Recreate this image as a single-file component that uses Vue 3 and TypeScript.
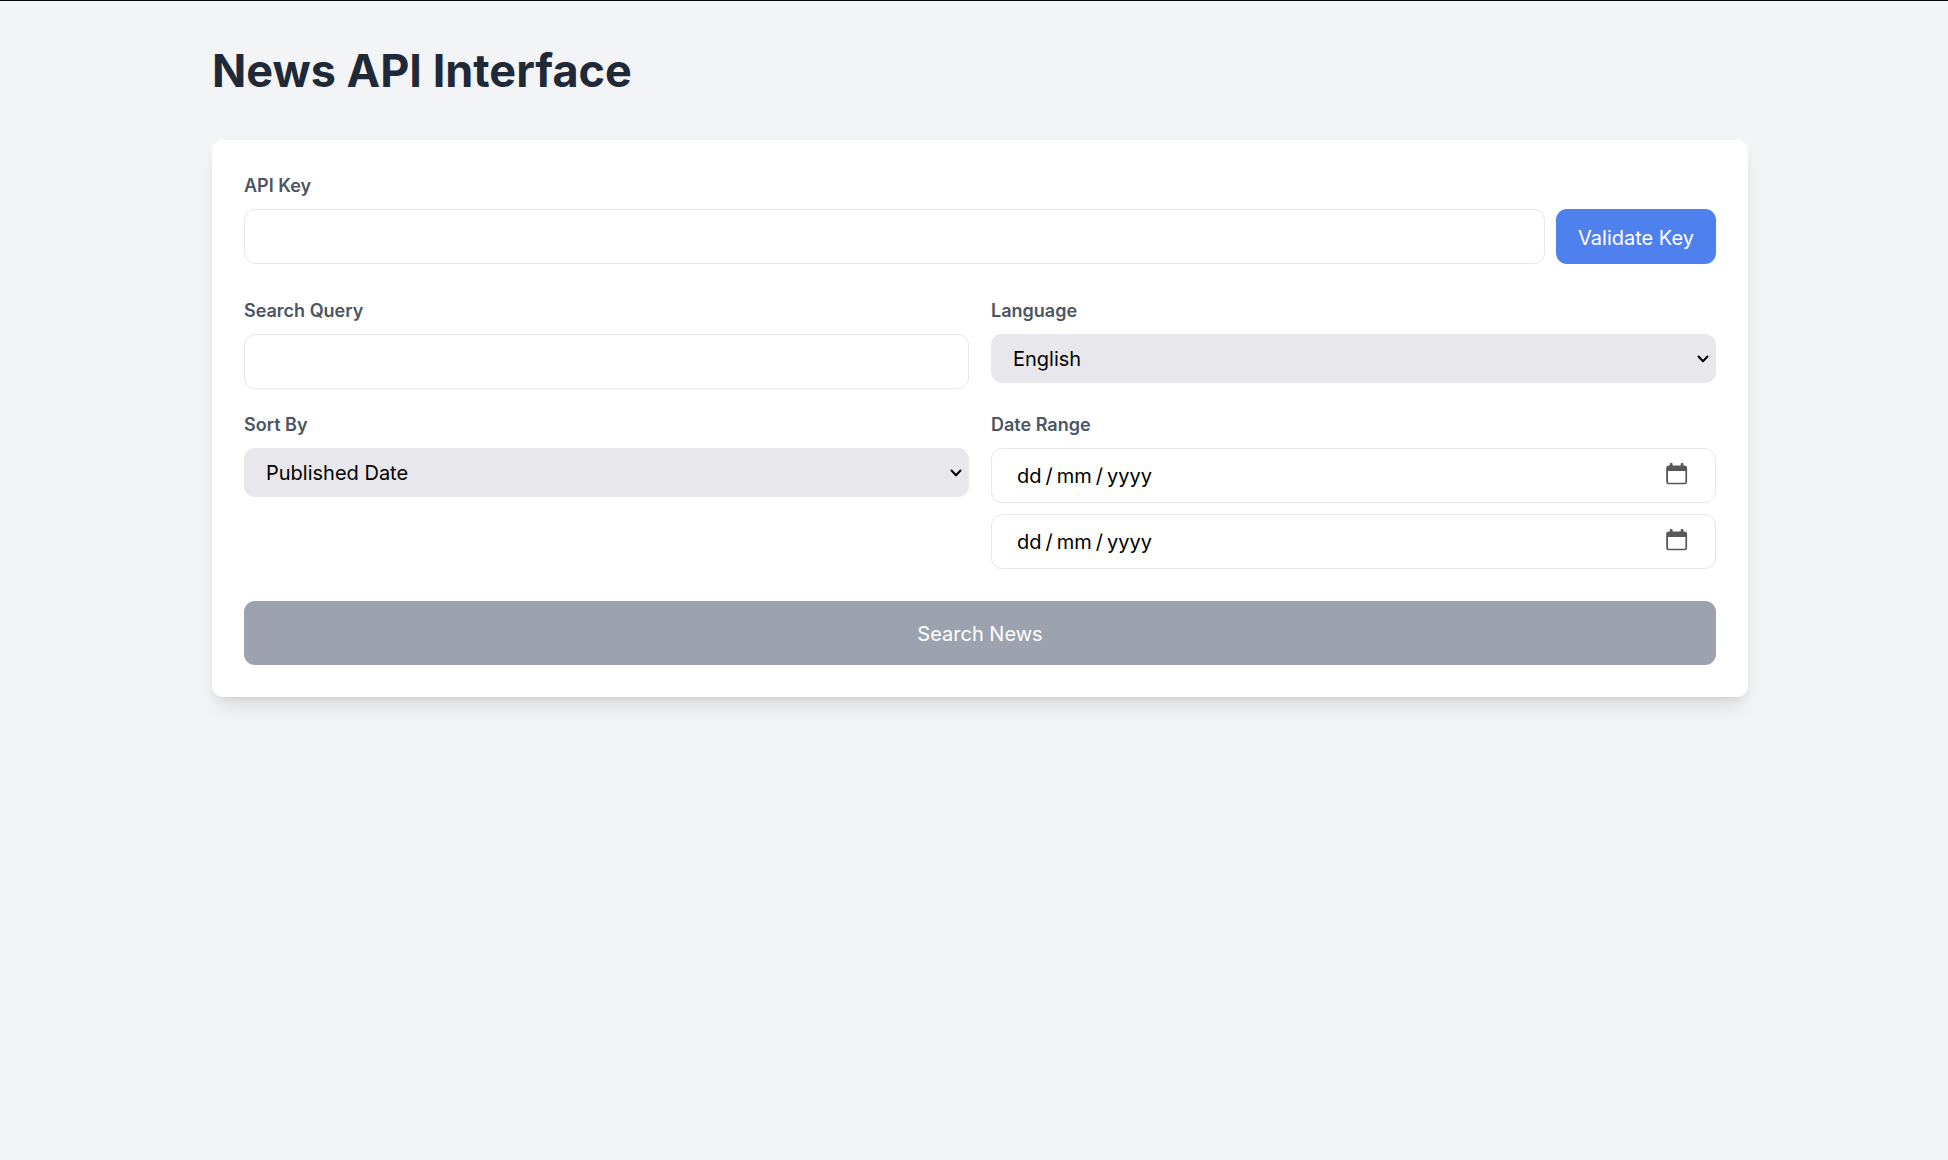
<script setup lang="ts">
import { computed, ref } from 'vue'

interface Option {
  value: string
  label: string
}

const languages: Option[] = [
  { value: 'en', label: 'English' },
  { value: 'es', label: 'Spanish' },
  { value: 'fr', label: 'French' },
  { value: 'de', label: 'German' },
]

const sortOptions: Option[] = [
  { value: 'publishedAt', label: 'Published Date' },
  { value: 'relevancy', label: 'Relevancy' },
  { value: 'popularity', label: 'Popularity' },
]

const apiKey = ref('')
const keyValid = ref(false)
const query = ref('')
const language = ref('en')
const sortBy = ref('publishedAt')
const dates = ref<string[]>(['', ''])
const dateNames = ['From date', 'To date']

// Day, month and year parts shown in each date field
const dateParts = computed(() =>
  dates.value.map((d) => (d ? d.split('-').reverse() : ['dd', 'mm', 'yyyy'])),
)

function validateKey(): void {
  keyValid.value = apiKey.value.trim().length > 0
}
</script>

<template>
  <div class="page">
    <main class="container">
      <h1>News API Interface</h1>

      <form class="card" @submit.prevent>
        <div class="key-field">
          <label for="api-key">API Key</label>
          <div class="key-row">
            <input id="api-key" v-model="apiKey" class="control" type="password" />
            <button type="button" class="validate" @click="validateKey">Validate Key</button>
          </div>
        </div>

        <div class="grid">
          <div>
            <label for="query">Search Query</label>
            <input id="query" v-model="query" class="control" type="text" />
          </div>

          <div>
            <label for="language">Language</label>
            <div class="select">
              <select id="language" v-model="language">
                <option v-for="o in languages" :key="o.value" :value="o.value">{{ o.label }}</option>
              </select>
              <svg class="chevron" viewBox="0 0 12 8" aria-hidden="true"><path d="M1.5 1.5 6 6.3l4.5-4.8" /></svg>
            </div>
          </div>

          <div>
            <label for="sort">Sort By</label>
            <div class="select">
              <select id="sort" v-model="sortBy">
                <option v-for="o in sortOptions" :key="o.value" :value="o.value">{{ o.label }}</option>
              </select>
              <svg class="chevron" viewBox="0 0 12 8" aria-hidden="true"><path d="M1.5 1.5 6 6.3l4.5-4.8" /></svg>
            </div>
          </div>

          <div>
            <label for="date-0">Date Range</label>
            <div class="dates">
              <div v-for="(parts, i) in dateParts" :key="i" class="date">
                <input :id="`date-${i}`" v-model="dates[i]" class="control" type="date" :aria-label="dateNames[i]" />
                <span class="date-text" aria-hidden="true">{{ parts[0] }}<span class="slash">/</span>{{ parts[1] }}<span class="slash">/</span>{{ parts[2] }}</span>
                <svg class="calendar" viewBox="0 0 22 22" aria-hidden="true">
                  <path fill-rule="evenodd" d="M4.7 0h1a.9.9 0 0 1 .9.9v1.6h8.1V.9a.9.9 0 0 1 .9-.9h.9a.9.9 0 0 1 .9.9v1.6h1.2A2.5 2.5 0 0 1 21.1 5v14a2.3 2.3 0 0 1-2.3 2.3H2.5A2.3 2.3 0 0 1 .2 19V5a2.500 2.500 0 0 1 2.500-2.500h1.100V.9a.9.9 0 0 1 .9-.9ZM2 8.100V18.900a.8.8 0 0 0 .8.8h15.800a.8.8 0 0 0 .8-.8V8.100Z" />
                </svg>
              </div>
            </div>
          </div>
        </div>

        <button type="submit" class="search" :disabled="!keyValid">Search News</button>
      </form>
    </main>
  </div>
</template>

<style>
body {
  margin: 0;
  background: #f3f4f6;
}
</style>

<style scoped>
*,
*::before,
*::after {
  box-sizing: border-box;
}

.page {
  min-height: 100vh;
  padding: 43px 16px 43px 28px;
  border-top: 1px solid #08070d;
  background: #f3f4f6;
  color: #000;
  font-family: Inter, "Liberation Sans", sans-serif;
  font-size: 20px;
  line-height: 32px;
}

.container {
  max-width: 1536px;
  margin: 0 auto;
}

h1 {
  margin: 0 0 42px;
  color: #1f2937;
  font-size: 45px;
  font-weight: 700;
  line-height: 54px;
}

.card {
  padding: 32px;
  border-radius: 11px;
  background: #fff;
  box-shadow: 0 13px 20px -4px rgba(0, 0, 0, 0.1), 0 5px 8px -5px rgba(0, 0, 0, 0.1);
}

label {
  display: block;
  margin-bottom: 10px;
  color: #4b5563;
  font-size: 18px;
  font-weight: 600;
  line-height: 27px;
}

input,
select,
button {
  margin: 0;
  font: inherit;
  color: inherit;
}

.control {
  display: block;
  width: 100%;
  min-width: 0;
  height: 55px;
  padding: 0 21px;
  border: 1px solid #e5e7eb;
  border-radius: 11px;
  background: #fff;
}

.key-field {
  margin-bottom: 33px;
}

.key-row {
  display: flex;
  gap: 11px;
}

button {
  padding: 2px 22px 0;
  border: 0;
  border-radius: 11px;
  color: #fff;
  cursor: pointer;
}

.validate {
  flex: none;
  background: #4f81ee;
}

.grid {
  display: grid;
  grid-template-columns: 1fr 1fr;
  gap: 22px;
}

.select,
.date {
  position: relative;
}

select {
  display: block;
  width: 100%;
  height: 49px;
  padding: 0 32px 0 22px;
  border: 0;
  border-radius: 11px;
  appearance: none;
  background: #e8e7ec;
}

.chevron {
  position: absolute;
  top: 21px;
  right: 7px;
  width: 12px;
  height: 8px;
  fill: none;
  stroke: #000;
  stroke-width: 2;
  stroke-linecap: round;
  stroke-linejoin: round;
  pointer-events: none;
}

.dates {
  display: grid;
  gap: 11px;
}

.date input::-webkit-datetime-edit {
  opacity: 0;
}

.date input::-webkit-calendar-picker-indicator {
  width: 22px;
  height: 22px;
  opacity: 0;
}

.date-text {
  position: absolute;
  top: 12px;
  left: 26px;
  pointer-events: none;
}

.slash {
  padding: 0 4px;
}

.calendar {
  position: absolute;
  top: 15px;
  right: 28px;
  width: 22px;
  height: 22px;
  fill: #585858;
  pointer-events: none;
}

.search {
  display: block;
  width: 100%;
  height: 64px;
  margin-top: 32px;
  background: #3b82f6;
}

.search:disabled {
  background: #9ca3af;
  cursor: not-allowed;
}
</style>
